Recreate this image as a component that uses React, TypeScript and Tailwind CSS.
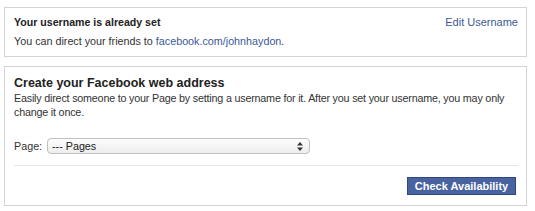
import React from "react";

export default function App() {
  return (
    <div
      className="w-[535px] h-[211px] bg-white pt-[7px] pl-[4px] pr-[8px] text-[#333333]"
      style={{ fontFamily: '"Liberation Sans", Arial, Helvetica, sans-serif' }}
    >
      <div className="h-[50px] border border-[#d4d4d4] pl-[9px] pr-[8px] pt-[7px]">
        <div className="flex justify-between items-start">
          <div className="text-[10.6px] leading-[14px] font-bold text-[#222]">Your username is already set</div>
          <a className="text-[11px] leading-[14px] text-[#3b5998]">Edit Username</a>
        </div>
        <div className="mt-[5px] text-[10.75px] leading-[14px]">
          You can direct your friends to <a className="text-[#3b5998]">facebook.com/johnhaydon</a>.
        </div>
      </div>

      <div className="mt-[9px] h-[140px] border border-[#d4d4d4] pl-[9px] pr-[8px] pt-[8px]">
        <div className="text-[12.5px] leading-[16px] font-bold text-[#222]">Create your Facebook web address</div>
        <div className="text-[10.75px] leading-[14px] tracking-[-0.2px] whitespace-nowrap">
          Easily direct someone to your Page by setting a username for it. After you set your username, you may only
          <br />
          change it once.
        </div>
        <div className="mt-[19px] flex items-center h-[16px]">
          <span className="text-[10.75px] leading-[14px] w-[33px]">Page:</span>
          <div className="w-[263px] h-[16px] rounded-[4px] border border-[#c0c0c0] bg-gradient-to-b from-[#fdfdfd] to-[#ededed] flex items-center justify-between pl-[4px] pr-[6px]">
            <span className="text-[10.75px] leading-[14px] text-[#222]">--- Pages</span>
            <svg width="6" height="9" viewBox="0 0 6 9">
              <path d="M3 0 L6 3.5 L0 3.5 Z" fill="#333" />
              <path d="M3 9 L6 5.5 L0 5.5 Z" fill="#333" />
            </svg>
          </div>
        </div>
        <div className="mt-[11px] h-[1px] bg-[#e4e4e4]" />
        <div className="mt-[11px] flex justify-end pr-[2px]">
          <button className="w-[109px] h-[18px] bg-[#4863a0] border border-[#30477d] text-white text-[11px] font-bold leading-[14px] flex items-center justify-center">
            Check Availability
          </button>
        </div>
      </div>
    </div>
  );
}
